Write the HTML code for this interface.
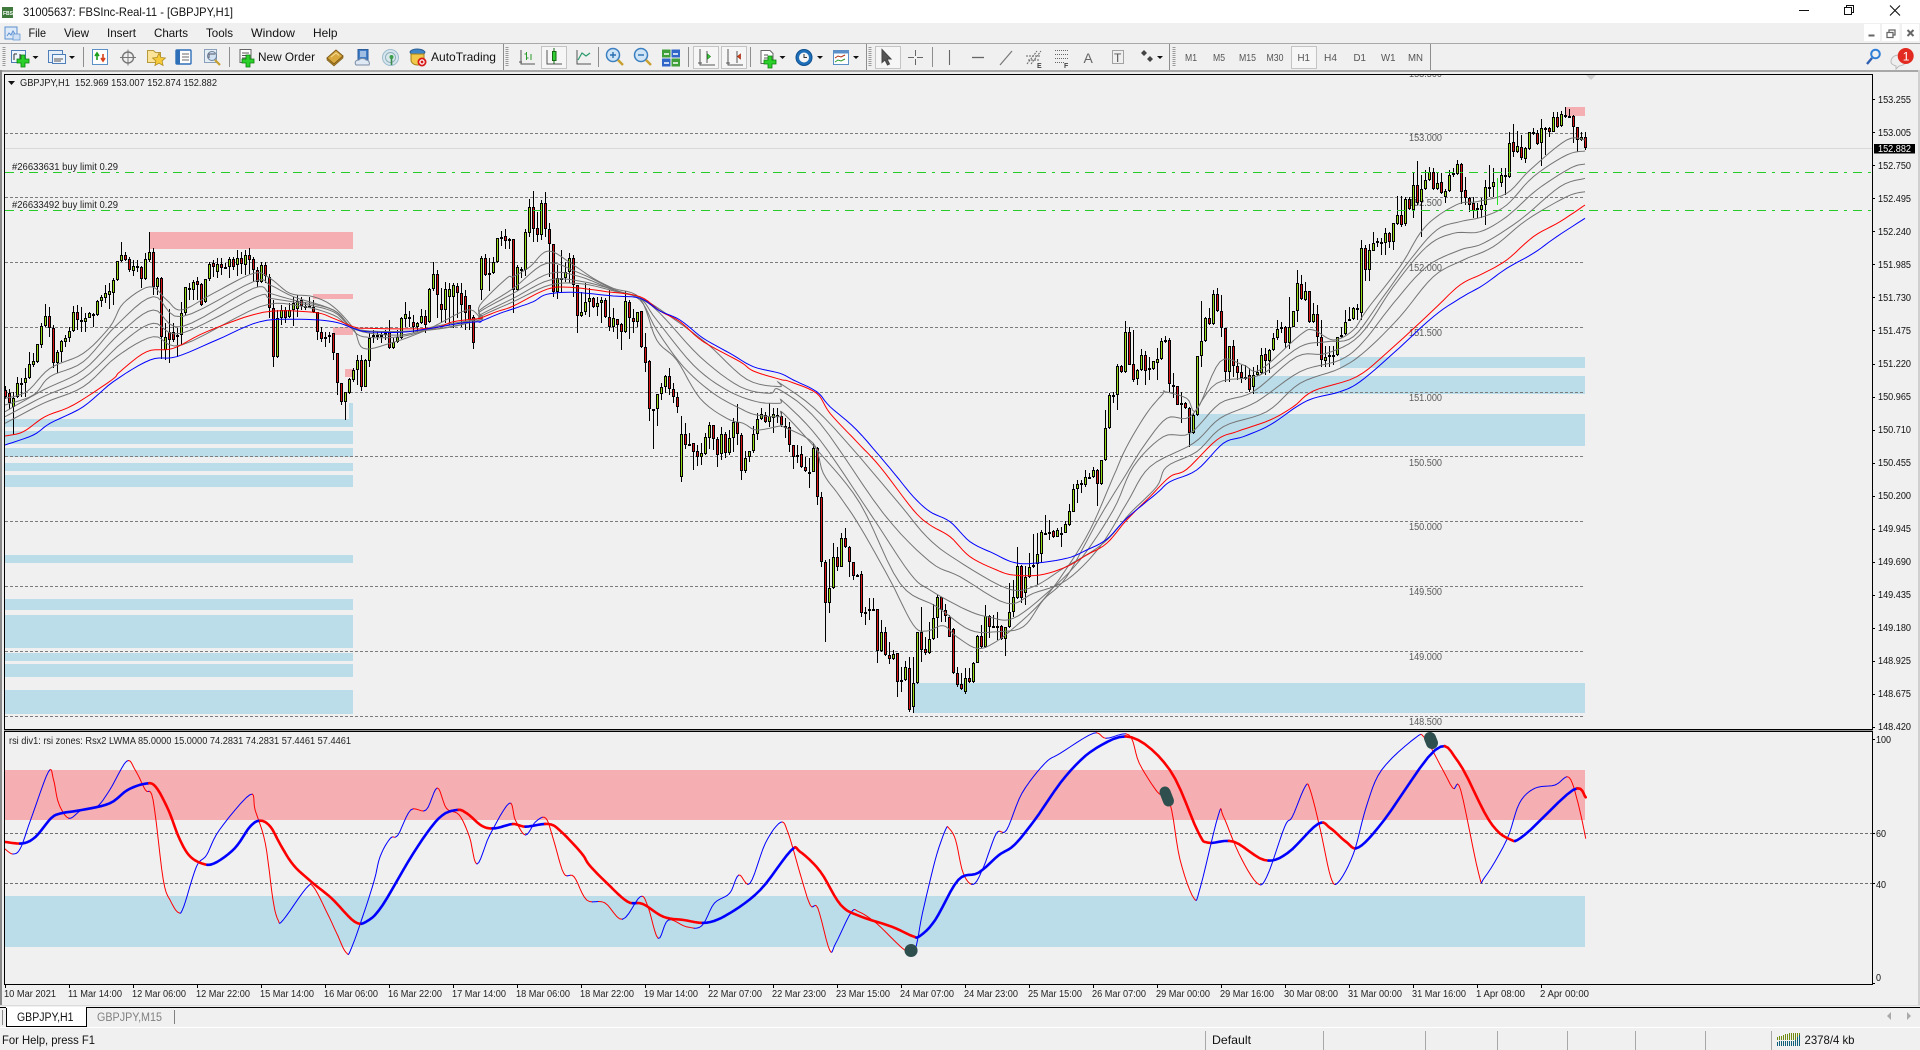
<!DOCTYPE html>
<html><head><meta charset="utf-8"><title>31005637: FBSInc-Real-11 - [GBPJPY,H1]</title>
<style>
html,body{margin:0;padding:0;width:1920px;height:1050px;overflow:hidden;background:#f0f0f0}
svg{display:block;font-family:"Liberation Sans",sans-serif}
.m{font-size:12px;fill:#111}
.tf{font-size:10.5px;fill:#555}
.ax{font-size:10px;fill:#111}
.t{font-size:10px;fill:#222}
.ml{font-size:10px;fill:#5a5a5a}
.ic{fill:none;stroke:#555;stroke-width:1}
</style></head><body>
<svg id="s" xmlns="http://www.w3.org/2000/svg" width="1920" height="1050" viewBox="0 0 1920 1050">
<defs>
<clipPath id="cm"><rect x="5" y="75" width="1867" height="654"/></clipPath>
<clipPath id="cs"><rect x="5" y="732" width="1867" height="252"/></clipPath>
<g id="plus"><path d="M-2-6h4v4h4v4h-4v4h-4v-4h-4v-4h4z" fill="#2bd02b" stroke="#0b7f0b" stroke-width=".8"/></g>
<g id="arr"><path d="M-3-1.5h6L0 1.5z" fill="#111"/></g>
<g id="grip"><path d="M0 0v20" stroke="#999" stroke-width="3" stroke-dasharray="1 1"/></g>
</defs>
<rect width="1920" height="1050" fill="#f0f0f0"/>
<!-- title bar -->
<rect width="1920" height="23" fill="#fff"/>
<rect x="2" y="7" width="11" height="11" fill="#3f7a3c"/>
<text x="3" y="15" font-size="5" font-weight="bold" fill="#fff">FBS</text>
<text x="23" y="16" font-size="12" fill="#111" textLength="210" lengthAdjust="spacingAndGlyphs">31005637: FBSInc-Real-11 - [GBPJPY,H1]</text>
<path d="M1799 10.5h10" stroke="#111"/>
<path d="M1844.5 7.5h7v7h-7zM1846.5 7.5v-2h7v7h-2" fill="none" stroke="#111"/>
<path d="M1890 5.5l10 10M1900 5.5l-10 10" stroke="#111" stroke-width="1.1"/>
<!-- menu bar -->
<rect x="5" y="27" width="12" height="12" fill="#dfeaf8" stroke="#5b8fd0"/>
<path d="M7 36l2-3 2 2 2-4 2 3" fill="none" stroke="#5b8fd0"/>
<rect x="13" y="34" width="7" height="6" fill="#cfe0f5" stroke="#5b8fd0" stroke-width=".7"/>
<text class="m" x="28.5" y="37" textLength="17.5" lengthAdjust="spacingAndGlyphs">File</text>
<text class="m" x="64" y="37" textLength="25" lengthAdjust="spacingAndGlyphs">View</text>
<text class="m" x="107" y="37" textLength="29" lengthAdjust="spacingAndGlyphs">Insert</text>
<text class="m" x="154" y="37" textLength="34" lengthAdjust="spacingAndGlyphs">Charts</text>
<text class="m" x="206" y="37" textLength="27" lengthAdjust="spacingAndGlyphs">Tools</text>
<text class="m" x="251" y="37" textLength="44" lengthAdjust="spacingAndGlyphs">Window</text>
<text class="m" x="313" y="37" textLength="24.5" lengthAdjust="spacingAndGlyphs">Help</text>
<g>
<rect x="1864" y="24" width="16" height="17" fill="#fff"/><rect x="1882" y="24" width="17.5" height="17" fill="#fff"/><rect x="1902" y="24" width="17" height="17" fill="#fff"/>
<path d="M1868.5 35.5h6" stroke="#666" stroke-width="2"/>
<path d="M1887 32.5h6v5h-6zM1889 32v-2h6v5h-2" fill="none" stroke="#666" stroke-width="1.3"/>
<path d="M1907.5 30l6 6M1913.5 30l-6 6" stroke="#666" stroke-width="2"/>
</g>
<!-- toolbar -->
<rect x="0" y="43" width="1920" height="1" fill="#a8a8a8"/>
<rect x="0" y="70" width="1920" height="2" fill="#a8a8a8"/>
<g stroke="#8e8e8e"><path d="M83.5 47v20M229.5 47v20M503.5 44v26M598.5 47v20M688.5 47v20M750.5 47v20M866.5 44v26M932.5 47v20M1169.5 44v26M1430.5 44v26"/></g>
<use href="#grip" x="4" y="47"/><use href="#grip" x="507" y="47"/><use href="#grip" x="870" y="47"/><use href="#grip" x="1174" y="47"/>
<!-- active boxes -->
<g fill="#f6f6f6" stroke="#c4c4c4"><rect x="541.5" y="46.5" width="25" height="22"/><rect x="693.5" y="46.5" width="25" height="22"/><rect x="721.5" y="46.5" width="25" height="22"/><rect x="875.5" y="46.5" width="25" height="22"/><rect x="1291.5" y="46.5" width="25" height="22"/></g>
<!-- new chart -->
<rect x="11.5" y="50.5" width="14" height="12" fill="#eef4fb" stroke="#4f7fb8"/><path d="M14 60v-6M14 54l3 0M20 60v-6" stroke="#333" fill="none"/><use href="#plus" x="23" y="61"/><use href="#arr" x="35.5" y="57.5"/>
<rect x="48.5" y="50.5" width="14" height="12" fill="#e6eff9" stroke="#4f7fb8"/><rect x="52.5" y="54.5" width="13" height="9" fill="#eef4fb" stroke="#4f7fb8"/><path d="M54 59h9M54 61h7" stroke="#555"/><use href="#arr" x="72" y="57.5"/>
<!-- market watch -->
<rect x="92.5" y="49.5" width="15" height="15" fill="#fff" stroke="#5b8fc8"/><path d="M97 60v-6m-2 2l2-3 2 3" fill="none" stroke="#1aa01a" stroke-width="1.6"/><path d="M103 54v6m-2-2l2 3 2-3" fill="none" stroke="#d9401a" stroke-width="1.6"/>
<!-- crosshair -->
<circle cx="128" cy="57.5" r="5.5" fill="none" stroke="#777" stroke-width="1.4"/><path d="M128 49.5v16M120 57.5h16" stroke="#777"/>
<!-- folder star -->
<path d="M147.5 50.5h6l2 2h5v10h-13z" fill="#fbe39a" stroke="#b69a3c"/><path d="M159 53l2 4.5 4.5.5-3.4 3 1 4.6-4.1-2.4-4.1 2.4 1-4.6-3.4-3 4.5-.5z" fill="#f5c93a" stroke="#a9851a" stroke-width=".7"/>
<!-- terminal -->
<rect x="176" y="50" width="15" height="14" rx="1" fill="#fff" stroke="#2e6fb8" stroke-width="1.4"/><rect x="176" y="50" width="4" height="14" fill="#2e6fb8"/><path d="M182 54h7M182 57h7M182 60h7" stroke="#6a6a6a"/>
<!-- tester -->
<rect x="204.5" y="49.5" width="12" height="13" fill="#e5edf5" stroke="#8aa0b8"/><circle cx="212" cy="56" r="4.5" fill="#cfe1f2" stroke="#6a7f98"/><path d="M215 60l5 5" stroke="#c8a030" stroke-width="2.2"/><path d="M209 58v-4h6" stroke="#556" fill="none"/>
<!-- new order -->
<rect x="240" y="49.5" width="11" height="13" fill="#fff" stroke="#666"/><path d="M242 53h7M242 55.5h7M242 58h4" stroke="#555"/><use href="#plus" x="248" y="61"/>
<text x="258" y="61" font-size="12" fill="#111" textLength="57" lengthAdjust="spacingAndGlyphs">New Order</text>
<!-- book -->
<path d="M327 58l9-8 7 6-9 8z" fill="#d9a93f" stroke="#7d5a16"/><path d="M327 58l0 2 7 6 9-8v-2l-9 8z" fill="#a9802a" stroke="#7d5a16" stroke-width=".6"/><path d="M331 57l5-4 3 2.500" stroke="#f4dc9a" fill="none"/>
<!-- cloud -->
<rect x="358" y="49.5" width="10" height="11" fill="#3f7dc6" stroke="#2a5c9c"/><path d="M360 52h6M360 54h6M360 56h6" stroke="#fff"/><path d="M356 65c-2-3 0-5 3-5 1-2 6-2 7 0 3 0 4 3 3 5z" fill="#dfe9f5" stroke="#7a8ca4"/>
<!-- signals -->
<circle cx="390.5" cy="57.5" r="8" fill="#d7e6ee" stroke="#9cbccc"/><circle cx="390.5" cy="57.5" r="5" fill="#d9e8ea" stroke="#8fb0bc"/><circle cx="391.5" cy="57" r="2" fill="#3ba04a"/><path d="M391.5 58v7" stroke="#3b8a50" stroke-width="1.6"/>
<!-- autotrading -->
<path d="M410 52c2-4 12-4 15 0l-1 2h-13z" fill="#3f86c8" stroke="#2a5c90"/><path d="M411 54h13v6c0 3-3 5-6.500 5s-6.500-2-6.500-5z" fill="#f2c84a" stroke="#a0801a"/><circle cx="422" cy="62" r="3.6" fill="#fff" stroke="#d81818" stroke-width="1.8"/><rect x="420.700" y="60.700" width="2.600" height="2.600" fill="#d81818"/>
<text x="431" y="61" font-size="12" fill="#111" textLength="65" lengthAdjust="spacingAndGlyphs">AutoTrading</text>
<!-- chart types -->
<g stroke="#555" fill="none"><path d="M521 50v14h14M519 62h3"/><path d="M526.500 52v8M524.500 54h2M526.500 58h2M531 54v6" stroke="#2a9a2a"/></g>
<g stroke="#555" fill="none"><path d="M547 50v14h15"/><rect x="552.500" y="51.500" width="3.500" height="9" fill="#33cc33" stroke="#136b13"/><path d="M554 48v3M554 61v3" stroke="#136b13"/></g>
<g stroke="#555" fill="none"><path d="M577 50v14h14"/><path d="M578 60l4-7 4 3 4-3" stroke="#2a9a6a" stroke-width="1.2"/></g>
<!-- zoom -->
<circle cx="613" cy="55" r="6.500" fill="#cfe4f7" stroke="#3b7fc0" stroke-width="1.5"/><path d="M610 55h6M613 52v6" stroke="#2a6fb0" stroke-width="1.400"/><path d="M618 60l5 5" stroke="#c8a030" stroke-width="2.400"/>
<circle cx="641" cy="55" r="6.500" fill="#cfe4f7" stroke="#3b7fc0" stroke-width="1.5"/><path d="M638 55h6" stroke="#2a6fb0" stroke-width="1.400"/><path d="M646 60l5 5" stroke="#c8a030" stroke-width="2.400"/>
<!-- tile -->
<g><rect x="662" y="49.500" width="8.500" height="8" fill="#3fa03a"/><rect x="671.500" y="49.500" width="8.500" height="8" fill="#2f66c8"/><rect x="662" y="58.500" width="8.500" height="8" fill="#2f66c8"/><rect x="671.500" y="58.500" width="8.500" height="8" fill="#3fa03a"/><path d="M664 54h5M673 54h5M664 63h5M673 63h5" stroke="#fff" stroke-width="1.500"/></g>
<!-- autoscroll / shift -->
<g stroke="#555" fill="none"><path d="M700 49v16h15M698 63h4M707 51v12"/><path d="M707.500 54l3 2.500-3 2.500z" fill="#3fcc3f" stroke="#1a8a1a" stroke-width=".7"/></g>
<g stroke="#555" fill="none"><path d="M728 49v16h15M726 63h4M737 51v12"/><path d="M740.500 54l-3 2.500 3 2.500z" fill="#d8441a" stroke="#a02a10" stroke-width=".7"/></g>
<!-- indicators -->
<path d="M761 50.500h9l3 3v10h-12z" fill="#fff" stroke="#666"/><path d="M764 55h4M764 58h4" stroke="#555"/><use href="#plus" x="770" y="62"/><use href="#arr" x="782.500" y="57.500"/>
<!-- clock -->
<circle cx="804" cy="57.500" r="8" fill="#1f6fb8" stroke="#0d4f90"/><circle cx="804" cy="57.500" r="5" fill="#f5f5f5"/><path d="M804 54v3.500h3" stroke="#333" fill="none"/><use href="#arr" x="820" y="57.500"/>
<!-- template -->
<rect x="833.500" y="50.500" width="15" height="14" fill="#fff" stroke="#5b8fc8"/><rect x="833.500" y="50.500" width="15" height="3" fill="#5b8fc8"/><path d="M835 58l3-2 3 1 4-2" stroke="#b03010" fill="none"/><path d="M835 62l3-2 3 1 4-2" stroke="#2a9a2a" fill="none"/><use href="#arr" x="856" y="57.500"/>
<!-- cursor -->
<path d="M882 49.500v13l3-2.500 2.500 5 2-1-2.500-5h4z" fill="#555" stroke="#444"/>
<path d="M915.500 50v15M908 57.500h15" stroke="#666" stroke-dasharray="6 3"/>
<path d="M949.500 50v15" stroke="#666" stroke-width="1.100"/>
<path d="M972 57.500h12" stroke="#666" stroke-width="1.300"/>
<path d="M1000 65l12-14" stroke="#777" stroke-width="1.200"/>
<g stroke="#666" fill="none"><path d="M1027 64l10-13M1031 64l10-13M1026 56h14M1028 60h12" stroke-dasharray="2 1"/></g><text x="1037" y="68" font-size="7" fill="#444" font-weight="bold">E</text>
<path d="M1055 50.500h14M1055 54.500h14M1055 58.500h14M1055 62.500h10" stroke="#666" stroke-dasharray="1 1"/><text x="1064" y="68" font-size="7" fill="#444" font-weight="bold">F</text>
<text x="1083.500" y="63" font-size="14" fill="#666">A</text>
<rect x="1112.500" y="50.500" width="11" height="13" fill="none" stroke="#555" stroke-dasharray="1 1"/><text x="1114" y="62" font-size="12" fill="#555">T</text>
<path d="M1144 50l3 3-3 3-3-3zM1150 56l3 3-3 3-3-3z" fill="#444"/><use href="#arr" x="1160" y="57.500"/>
<!-- periods -->
<text class="tf" x="1185" y="61" textLength="12" lengthAdjust="spacingAndGlyphs">M1</text>
<text class="tf" x="1213" y="61" textLength="12" lengthAdjust="spacingAndGlyphs">M5</text>
<text class="tf" x="1239" y="61" textLength="17" lengthAdjust="spacingAndGlyphs">M15</text>
<text class="tf" x="1266.500" y="61" textLength="17" lengthAdjust="spacingAndGlyphs">M30</text>
<text class="tf" x="1297.500" y="61" textLength="12.500" lengthAdjust="spacingAndGlyphs">H1</text>
<text class="tf" x="1324" y="61" textLength="13" lengthAdjust="spacingAndGlyphs">H4</text>
<text class="tf" x="1353.500" y="61" textLength="12.500" lengthAdjust="spacingAndGlyphs">D1</text>
<text class="tf" x="1381" y="61" textLength="14.500" lengthAdjust="spacingAndGlyphs">W1</text>
<text class="tf" x="1408" y="61" textLength="15" lengthAdjust="spacingAndGlyphs">MN</text>
<!-- search/chat -->
<circle cx="1875.500" cy="54" r="4.300" fill="none" stroke="#2f7fd8" stroke-width="2"/><path d="M1872 58l-5 6" stroke="#2f5fb0" stroke-width="2.400"/>
<path d="M1891 62c0-5 4-7 8-7s7 3 7 6-4 5-7 5l-3 3v-3c-3-1-5-2-5-4z" fill="#eee" stroke="#bbb"/>
<circle cx="1905.700" cy="56" r="8" fill="#e22a20"/><text x="1902.800" y="60.500" font-size="12" fill="#fff">1</text>

<!-- chart frame areas -->
<rect x="0" y="70" width="2" height="936" fill="#8a8a8a"/>
<rect x="5" y="75" width="1867" height="654" fill="#f0f0f0"/>
<rect x="5" y="732" width="1867" height="252" fill="#f0f0f0"/>

<g clip-path="url(#cm)">
<!-- zones main -->
<g fill="#bbddea">
<rect x="349" y="403" width="4" height="16"/>
<rect x="5" y="419" width="348" height="8"/><rect x="5" y="431" width="348" height="13"/><rect x="5" y="448" width="348" height="9"/><rect x="5" y="463" width="348" height="8"/><rect x="5" y="475" width="348" height="12"/>
<rect x="5" y="555" width="348" height="8"/><rect x="5" y="599" width="348" height="11"/><rect x="5" y="615" width="348" height="33"/><rect x="5" y="653" width="348" height="8"/><rect x="5" y="664" width="348" height="13"/><rect x="5" y="690" width="348" height="24"/>
<rect x="1340" y="357" width="245" height="11"/><rect x="1253" y="376" width="332" height="18"/><rect x="1190" y="414" width="395" height="32"/><rect x="913" y="683" width="672" height="30"/>
</g>
<g fill="#f5aeb1">
<rect x="150" y="232" width="203" height="17"/><rect x="313" y="294" width="40" height="5"/><rect x="333" y="327" width="20" height="8"/><rect x="345" y="369" width="8" height="8"/>
<rect x="1566" y="107" width="19" height="9"/>
</g>
<!-- grid -->
<g stroke="#7c7c7c" stroke-dasharray="3 2" fill="none">
<path d="M5 133.500H1585M5 197.500H1585M5 262.500H1585M5 327.500H1585M5 392.500H1585M5 456.500H1585M5 521.500H1585M5 586.500H1585M5 651.500H1585M5 716.500H1585"/>
</g>
<path d="M5 148.500H1872" stroke="#d8d8d8"/>
<path d="M1586 75h10l-5 5z" fill="#cfcfcf"/>
<g>
<text class="ml" x="1409" y="77" textLength="33" lengthAdjust="spacingAndGlyphs">153.500</text>
<text class="ml" x="1409" y="141" textLength="33" lengthAdjust="spacingAndGlyphs">153.000</text>
<text class="ml" x="1409" y="206" textLength="33" lengthAdjust="spacingAndGlyphs">152.500</text>
<text class="ml" x="1409" y="271" textLength="33" lengthAdjust="spacingAndGlyphs">152.000</text>
<text class="ml" x="1409" y="336" textLength="33" lengthAdjust="spacingAndGlyphs">151.500</text>
<text class="ml" x="1409" y="401" textLength="33" lengthAdjust="spacingAndGlyphs">151.000</text>
<text class="ml" x="1409" y="466" textLength="33" lengthAdjust="spacingAndGlyphs">150.500</text>
<text class="ml" x="1409" y="530" textLength="33" lengthAdjust="spacingAndGlyphs">150.000</text>
<text class="ml" x="1409" y="595" textLength="33" lengthAdjust="spacingAndGlyphs">149.500</text>
<text class="ml" x="1409" y="660" textLength="33" lengthAdjust="spacingAndGlyphs">149.000</text>
<text class="ml" x="1409" y="725" textLength="33" lengthAdjust="spacingAndGlyphs">148.500</text>
</g>
<g id="candles"></g>
<g id="mas" fill="none"></g>
<path d="M5 172.500H1872M5 210.500H1872" stroke="#28cc28" stroke-dasharray="9 6 3 6" fill="none"/>
<path d="M1497.500 178v27" stroke="#28e028"/>
<text class="t" x="12" y="170" fill="#333" textLength="106" lengthAdjust="spacingAndGlyphs">#26633631 buy limit 0.29</text>
<text class="t" x="12" y="208" fill="#333" textLength="106" lengthAdjust="spacingAndGlyphs">#26633492 buy limit 0.29</text>
<path d="M8 81h7l-3.500 4z" fill="#111"/>
<text class="t" x="20" y="86" fill="#111" xml:space="preserve" textLength="197" lengthAdjust="spacingAndGlyphs">GBPJPY,H1  152.969 153.007 152.874 152.882</text>
</g>

<g clip-path="url(#cs)">
<rect x="5" y="770" width="1580" height="50" fill="#f5aeb1"/>
<rect x="5" y="896" width="1580" height="51" fill="#bbddea"/>
<path d="M5 833.500H1872M5 883.500H1872" stroke="#707070" stroke-dasharray="3 2" fill="none"/>
<g id="rsi" fill="none" stroke-linejoin="round" stroke-linecap="round"></g>
<g stroke="#2f4f4f" stroke-linecap="round" fill="none">
<path d="M911 950.500h.1" stroke-width="13"/>
<path d="M1165 792l3.500 9" stroke-width="11"/>
<path d="M1430 738l2 5" stroke-width="12"/>
</g>
<text class="t" x="9" y="744" fill="#111" textLength="342" lengthAdjust="spacingAndGlyphs">rsi div1: rsi zones: Rsx2 LWMA 85.0000 15.0000 74.2831 74.2831 57.4461 57.4461</text>
</g>

<!-- frame lines -->
<g fill="#000">
<rect x="4" y="74" width="1869" height="1"/>
<rect x="4" y="74" width="1" height="911"/>
<rect x="1872" y="74" width="1" height="911"/>
<rect x="4" y="984" width="1869" height="1"/>
<rect x="4" y="729" width="1869" height="1"/>
<rect x="4" y="731" width="1869" height="1"/>
</g>
<rect x="4" y="730" width="1869" height="1" fill="#9a9a9a"/>

<!-- right axis -->
<g id="axt" stroke="#000" fill="none"><path d="M1872 99.500h3M1872 132.500h3M1872 165.500h3M1872 198.500h3M1872 231.500h3M1872 264.500h3M1872 297.500h3M1872 330.500h3M1872 364.500h3M1872 397.500h3M1872 430.500h3M1872 463.500h3M1872 496.500h3M1872 529.500h3M1872 562.500h3M1872 595.500h3M1872 628.500h3M1872 661.500h3M1872 694.500h3M1872 727.500h3M1872 739.500h3M1872 833.500h3M1872 883.500h3M1872 983.500h3"/></g>
<g>
<text class="ax" x="1878" y="103" textLength="33" lengthAdjust="spacingAndGlyphs">153.255</text>
<text class="ax" x="1878" y="136" textLength="33" lengthAdjust="spacingAndGlyphs">153.005</text>
<text class="ax" x="1878" y="169" textLength="33" lengthAdjust="spacingAndGlyphs">152.750</text>
<text class="ax" x="1878" y="202" textLength="33" lengthAdjust="spacingAndGlyphs">152.495</text>
<text class="ax" x="1878" y="235" textLength="33" lengthAdjust="spacingAndGlyphs">152.240</text>
<text class="ax" x="1878" y="268" textLength="33" lengthAdjust="spacingAndGlyphs">151.985</text>
<text class="ax" x="1878" y="301" textLength="33" lengthAdjust="spacingAndGlyphs">151.730</text>
<text class="ax" x="1878" y="334" textLength="33" lengthAdjust="spacingAndGlyphs">151.475</text>
<text class="ax" x="1878" y="367" textLength="33" lengthAdjust="spacingAndGlyphs">151.220</text>
<text class="ax" x="1878" y="400" textLength="33" lengthAdjust="spacingAndGlyphs">150.965</text>
<text class="ax" x="1878" y="433" textLength="33" lengthAdjust="spacingAndGlyphs">150.710</text>
<text class="ax" x="1878" y="466" textLength="33" lengthAdjust="spacingAndGlyphs">150.455</text>
<text class="ax" x="1878" y="499" textLength="33" lengthAdjust="spacingAndGlyphs">150.200</text>
<text class="ax" x="1878" y="532" textLength="33" lengthAdjust="spacingAndGlyphs">149.945</text>
<text class="ax" x="1878" y="565" textLength="33" lengthAdjust="spacingAndGlyphs">149.690</text>
<text class="ax" x="1878" y="598" textLength="33" lengthAdjust="spacingAndGlyphs">149.435</text>
<text class="ax" x="1878" y="631" textLength="33" lengthAdjust="spacingAndGlyphs">149.180</text>
<text class="ax" x="1878" y="664" textLength="33" lengthAdjust="spacingAndGlyphs">148.925</text>
<text class="ax" x="1878" y="697" textLength="33" lengthAdjust="spacingAndGlyphs">148.675</text>
<text class="ax" x="1878" y="730" textLength="33" lengthAdjust="spacingAndGlyphs">148.420</text>
<rect x="1874" y="144" width="41" height="9.500" fill="#000"/>
<text x="1878" y="152" font-size="10" fill="#fff" textLength="33" lengthAdjust="spacingAndGlyphs">152.882</text>
<text class="ax" x="1876" y="743" textLength="15" lengthAdjust="spacingAndGlyphs">100</text>
<text class="ax" x="1876" y="837" textLength="10" lengthAdjust="spacingAndGlyphs">60</text>
<text class="ax" x="1876" y="888" textLength="10" lengthAdjust="spacingAndGlyphs">40</text>
<text class="ax" x="1876" y="981" textLength="5" lengthAdjust="spacingAndGlyphs">0</text>
</g>

<!-- time axis -->
<path d="M5.500 985v3M69.500 985v3M133.500 985v3M197.500 985v3M261.500 985v3M325.500 985v3M389.500 985v3M453.500 985v3M517.500 985v3M581.500 985v3M645.500 985v3M709.500 985v3M773.500 985v3M837.500 985v3M901.500 985v3M965.500 985v3M1029.500 985v3M1093.500 985v3M1157.500 985v3M1221.500 985v3M1285.500 985v3M1349.500 985v3M1413.500 985v3M1477.500 985v3M1541.500 985v3" stroke="#000"/>
<g>
<text class="t" x="4" y="997" textLength="52" lengthAdjust="spacingAndGlyphs">10 Mar 2021</text>
<text class="t" x="68" y="997" textLength="54" lengthAdjust="spacingAndGlyphs">11 Mar 14:00</text>
<text class="t" x="132" y="997" textLength="54" lengthAdjust="spacingAndGlyphs">12 Mar 06:00</text>
<text class="t" x="196" y="997" textLength="54" lengthAdjust="spacingAndGlyphs">12 Mar 22:00</text>
<text class="t" x="260" y="997" textLength="54" lengthAdjust="spacingAndGlyphs">15 Mar 14:00</text>
<text class="t" x="324" y="997" textLength="54" lengthAdjust="spacingAndGlyphs">16 Mar 06:00</text>
<text class="t" x="388" y="997" textLength="54" lengthAdjust="spacingAndGlyphs">16 Mar 22:00</text>
<text class="t" x="452" y="997" textLength="54" lengthAdjust="spacingAndGlyphs">17 Mar 14:00</text>
<text class="t" x="516" y="997" textLength="54" lengthAdjust="spacingAndGlyphs">18 Mar 06:00</text>
<text class="t" x="580" y="997" textLength="54" lengthAdjust="spacingAndGlyphs">18 Mar 22:00</text>
<text class="t" x="644" y="997" textLength="54" lengthAdjust="spacingAndGlyphs">19 Mar 14:00</text>
<text class="t" x="708" y="997" textLength="54" lengthAdjust="spacingAndGlyphs">22 Mar 07:00</text>
<text class="t" x="772" y="997" textLength="54" lengthAdjust="spacingAndGlyphs">22 Mar 23:00</text>
<text class="t" x="836" y="997" textLength="54" lengthAdjust="spacingAndGlyphs">23 Mar 15:00</text>
<text class="t" x="900" y="997" textLength="54" lengthAdjust="spacingAndGlyphs">24 Mar 07:00</text>
<text class="t" x="964" y="997" textLength="54" lengthAdjust="spacingAndGlyphs">24 Mar 23:00</text>
<text class="t" x="1028" y="997" textLength="54" lengthAdjust="spacingAndGlyphs">25 Mar 15:00</text>
<text class="t" x="1092" y="997" textLength="54" lengthAdjust="spacingAndGlyphs">26 Mar 07:00</text>
<text class="t" x="1156" y="997" textLength="54" lengthAdjust="spacingAndGlyphs">29 Mar 00:00</text>
<text class="t" x="1220" y="997" textLength="54" lengthAdjust="spacingAndGlyphs">29 Mar 16:00</text>
<text class="t" x="1284" y="997" textLength="54" lengthAdjust="spacingAndGlyphs">30 Mar 08:00</text>
<text class="t" x="1348" y="997" textLength="54" lengthAdjust="spacingAndGlyphs">31 Mar 00:00</text>
<text class="t" x="1412" y="997" textLength="54" lengthAdjust="spacingAndGlyphs">31 Mar 16:00</text>
<text class="t" x="1476" y="997" textLength="49" lengthAdjust="spacingAndGlyphs">1 Apr 08:00</text>
<text class="t" x="1540" y="997" textLength="49" lengthAdjust="spacingAndGlyphs">2 Apr 00:00</text>
</g>

<!-- tabs -->
<rect x="0" y="1005" width="1920" height="1" fill="#dcdcdc"/>
<rect x="0" y="1007" width="1920" height="1" fill="#000"/>
<rect x="2" y="1010" width="1" height="15" fill="#8a8a8a"/>
<rect x="6" y="1007" width="80" height="19" fill="#fff"/>
<path d="M6.500 1008v18.500H86.500V1008" fill="none" stroke="#000"/>
<text x="17" y="1021" font-size="11.500" fill="#111" textLength="56.500" lengthAdjust="spacingAndGlyphs">GBPJPY,H1</text>
<text x="97" y="1021" font-size="11.500" fill="#808080" textLength="65" lengthAdjust="spacingAndGlyphs">GBPJPY,M15</text>
<rect x="174" y="1010" width="1" height="14" fill="#808080"/>
<path d="M1891 1012v8l-4-4zM1907 1012v8l4-4z" fill="#aaa"/>
<!-- status -->
<rect x="0" y="1027" width="1920" height="1" fill="#fff"/>
<text x="2" y="1044" font-size="12" fill="#111" textLength="93" lengthAdjust="spacingAndGlyphs">For Help, press F1</text>
<text x="1212" y="1044" font-size="12" fill="#111" textLength="39" lengthAdjust="spacingAndGlyphs">Default</text>
<path d="M1205.500 1031v19M1323.500 1031v19M1425.500 1031v19M1497.500 1031v19M1567.500 1031v19M1635.500 1031v19M1705.500 1031v19M1771.500 1031v19" stroke="#a8a8a8"/>
<g>
<path d="M1777.500 1037v3M1779.500 1036v4M1781.500 1036v4M1783.500 1035v5M1785.500 1034v6M1787.500 1034v6M1789.500 1033v7M1791.500 1033v7M1793.500 1033v7M1795.500 1033v7M1797.500 1033v7M1799.500 1033v7" stroke="#6f8a10"/>
<path d="M1777.500 1042v4M1779.500 1041v5M1781.500 1041v5M1783.500 1041v5M1785.500 1041v5M1787.500 1041v5M1789.500 1041v5M1791.500 1041v5M1793.500 1041v5M1795.500 1040v6M1797.500 1037v9M1799.500 1035v11" stroke="#0f5f7a"/>
</g>
<text x="1804.500" y="1044" font-size="12" fill="#111" textLength="50" lengthAdjust="spacingAndGlyphs">2378/4 kb</text>
<rect x="1918" y="70" width="2" height="935" fill="#d0d0d0"/>
</svg>
<script>
(function(){
var NS='http://www.w3.org/2000/svg';
function mk(par,a){var e=document.createElementNS(NS,'path');for(var k in a)e.setAttribute(k,a[k]);par.appendChild(e);return e;}
var seed=7;function rnd(){seed=(seed*1103515245+12345)&0x7fffffff;return seed/0x7fffffff;}
var W='',B='',G='',R='';
function sec(xs,oy,str){
 str.trim().split(/\s+/).forEach(function(t,i){
  var m=t.match(/^([grdn])(\d+)(?:-(\d+))?(?::(\d+)-(\d+))?$/);if(!m||m[1]=='n')return;
  var x=xs+4*i,top=Math.round(oy+ +m[2]/3),bot=m[3]?Math.round(oy+ +m[3]/3):top+1;
  if(bot-top<2)bot=top+2;
  var hi=m[4]?Math.round(oy+ +m[4]/3):top-Math.round(1+rnd()*5);
  var lo=m[5]?Math.round(oy+ +m[5]/3):bot+Math.round(1+rnd()*5);
  W+='M'+(x+.5)+' '+hi+'V'+lo;
  B+='M'+(x-1)+' '+top+'h3V'+bot+'h-3z';
  if(bot-top>2){var s='M'+x+' '+(top+1)+'h1V'+(bot-1)+'h-1z';if(m[1]=='g')G+=s;else if(m[1]=='r')R+=s;}
 });
}
sec(5,70,"r960-980 r970-1000 g983-1010:965-1095 g940-980:920-985 d938:925-980 g925-940:895-980 g883-925:845-928 g873-885:850-890 g823-875:823-880 g767-825:760-835 g737-767:703-770 r737-775:710-800 r775-880:765-895 g845-880:840-910 g813-845:810-875 g805-815:795-830 g783-805:770-815 g727-783:707-785 r727-750:705-780 d750:710-785 g743-755:730-785 g730-743:725-745 d732:728-770 g693-735:690-738 g682-693:675-710 g670-683:645-700 g663-676:640-718 g630-670:625-705 g572-630:572-632 g555-572:517-575 r555-570:545-572 r568-600:560-605 g588-602:570-618 d588:570-605 r590-627:588-655 g568-627:550-630 g547-570:487-575 r547-650:535-675 g625-650:620-675 r623-800:620-868 g800-840:760-870 r787-810:717-878 r787-810:760-815 d795:775-860 g730-795:695-825 g652-730:650-735 d655:640-690 g637-660:630-690 r633-645:620-690 r643-705:640-708 g628-697:628-700 g583-628:575-632 r580-592:570-620 g583-605:565-625 r583-593:565-615 d590:580-598 g568-590:560-625 r568-590:560-600 g565-585:540-618 r563-583:545-612 g555-585:540-615 r555-570:533-612 r568-600:560-635 r600-635:590-650 g585-637:575-640 r585-617:575-640 r620-715:612-745 r715-860:690-890 g745-860:720-865 g720-745:705-765 r720-745:712-760 g720-740:700-745 g700-720:680-768 g693-718:675-740 r690-708:680-720 d708:695-720 d708:680-715 r710-725:690-730 r727-787:725-810 r787-807:770-815 d800:785-830 d795:785-820 r790-850:788-870 r850-940:850-975 r940-995:940-1005 g967-995:965-1050 g927-970:925-972 g900-930:895-935 g870-900:855-945 r870-950:855-962 g870-950:868-952 g805-872:790-890 d795:780-820 d795:785-810 d795:785-820 d790:780-810 r787-835:750-838 g815-835:805-838 g800-815:780-818 g745-805:740-808 g733-747:695-770 d742:722-770 r755-770:735-790 g758-772:755-785 g737-760:718-762 r737-765:720-790 g658-755:655-760 g612-658:577-662 r612-675:600-745 r702-720:655-760 g658-720:635-760 g657-682:640-765 g645-682:640-775 r648-670:640-745 r670-705:640-770 r678-730:660-780 r705-750:705-780 r740-820:735-838");
sec(481,170,"g265-360:258-390 r265-315:252-318 d310:265-362 g277-310:262-312 g205-277:205-280 d202:182-228 r198-212:178-236 d208:205-236 r208-360:208-428 g292-360:285-362 d296:290-325 g187-300:178-318 g112-190:88-200 r112-178:63-215 r175-196:125-215 g100-196:90-210 r100-178:67-200 r178-222:160-320 r222-365:222-380 g325-365:285-387 d325:240-370 g307-325:275-335 g263-307:250-340 r263-345:255-380 r345-437:345-490 g427-437:365-442 g397-427:338-435 g385-395:355-440 r385-410:380-415 g400-410:380-437 g390-400:380-458 r390-440:385-445 r440-472:360-482 g445-472:415-485 r448-465:448-507 r462-487:460-540 g393-485:362-490 r395-445:390-508 r445-455:418-488 g425-455:425-470 r423-532:423-535 r530-578:490-605 r573-718:570-752 d716:716-838 g672-716:672-768 g650-672:640-690 g618-650:615-668 r618-658:595-675 r658-680:640-700 r682-712:665-730 g793-922:738-937 r793-825:760-838 d822:790-828 r820-845:820-900 r843-860:825-887 g850-860:820-885 g802-852:790-855 g765-805:755-838 r765-808:765-840 r807-855:800-890 g793-853:772-870 r793-850:785-865 g805-850:780-855 g755-805:745-845 r755-793:703-825 r795-902:790-930 g865-902:842-908 g843-862:842-875 g793-843:768-850 g747-793:728-810 g732-748:715-750 r735-755:725-760 g737-755:700-770 g732-745:715-790 d735:715-760 r737-765:727-770 d768:745-805 r770-826:755-845 r826-860:826-897 d855:825-880 r852-892:828-893 r892-902:860-905 d905:865-955 g835-905:820-907 r835-982:830-1005");
sec(821,380,"r352-547:335-560 r547-670:540-785 g625-670:537-700 g530-625:490-627 r530-560:500-572 g475-560:460-562 r475-502:445-505 r502-545:498-590 r545-587:545-600 d585:582-590 r583-700:572-710 d697:680-735 d687:655-720 d687:655-692 r688-812:688-848 g755-812:720-815 r755-825:740-828 r825-838:785-852 g822-836:810-840 r820-905:820-952 d900:862-935 g862-900:843-902 r865-990:832-995 g910-980:830-1000 g755-910:755-912 r757-810:682-845 r808-820:770-825 g778-820:725-822 g715-778:672-780 g652-715:645-775 r652-690:650-725 r690-707:672-725 r710-772:705-772 r748-880:745-882 r878-915:860-920 r912-926:880-930 g895-935:865-943 r895-907:865-910 g848-907:845-910 g767-848:765-850 r767-800:735-805 g708-800:675-805 r708-742:705-775 g737-742:705-745 d737:695-780 r737-778:735-780 g740-778:740-828 g695-740:610-745 g652-695:600-712 g557-655:502-657 r557-655:555-670 g592-640:558-675 g560-592:520-595 d555:462-565 g523-553:460-615 g457-523:450-545 d458:405-462 d456:420-480 r453-470:450-475 g450-470:445-472 d460:440-500 g432-458:422-460 g393-435:372-437 g328-395:312-397 g312-328:300-370 d310:300-340 g290-315:270-320 d290:280-295 g270-292:262-295 r270-313:268-378 g240-313:240-315");
sec(1105,90,"g1015-1110:960-1112 g915-1015:910-1018 d915:905-940 g828-915:822-960 r828-845:825-848 g727-845:693-848 r727-825:710-825 r823-870:720-875 g840-868:838-885 g795-840:778-842 r795-842:783-885 d833:800-870 g812-838:812-840 g807-820:775-870 g752-807:745-810 d750:738-760 r750-882:745-905 d885:850-925 r888-945:888-945 d940:905-1000 r938-955:935-958 r955-1030:952-1070 g975-1030:970-1032 g798-975:798-978 g752-798:632-830 g685-752:682-755 r685-703:655-705 g612-703:600-705 r612-663:595-665 r663-713:615-740 r713-845:713-875 g768-845:768-875 r768-828:750-860 r828-850:808-870 r847-865:825-878 d860:825-870 r855-900:835-905 g855-892:832-912 g847-855:825-858 g795-850:775-852 r793-812:775-855 g780-812:778-850 g745-780:730-782 g717-745:690-750 d710:695-730 r712-760:708-775 g712-758:622-776 g664-712:664-712 g580-664:540-695 r582-628:555-630 g602-630:575-632 r603-695:603-700 g672-695:640-698 r672-742:645-768 r742-810:690-830 g802-812:768-830 d795:768-830 d795:768-825 g742-795:740-797 d735:712-745 g695-733:660-735 d688:650-690 g655-688:652-690 d655:642-690 g475-670:450-690 r475-540:465-572 g480-540:462-572 g460-482:425-484 d453:445-470 d455:445-495 g428-460:415-495 r428-455:425-475 g400-455:400-480 g375-402:318-405 r375-405:318-410 g328-403:320-408 r328-358:320-360 g285-360:250-385 r285-340:213-345 g298-337:255-440 g270-298:240-300 g247-270:232-272 r247-298:235-300 g278-298:250-300 r275-310:250-312 g303-320:298-338 g255-302:240-305 d248:235-262 g222-253:210-255 r222-305:220-342 r300-325:262-345 r325-345:320-365 r338-362:320-385 d355:340-385 g345-360:325-385 g292-345:270-405 d290:225-320 g275-290:235-322 n0 g255-280:235-290 r255-262:235-315 g160-262:125-265 r157-187:102-200 g168-187:122-190 r170-205:135-210 g175-208:170-218 g127-178:125-180 d127:115-135 r130-163:120-165 g115-160:87-228 d115:112-195 r115-125:112-140 g82-125:65-125 r82-110:65-115 g72-108:62-112 d74:50-85 d78:58-85 r78-112:75-158 r112-150:110-185 g140-150:125-152 r142-175:125-180");
var c=document.getElementById('candles');
mk(c,{d:W,stroke:'#000','stroke-width':1,fill:'none','shape-rendering':'crispEdges'});
mk(c,{d:B,fill:'#000','shape-rendering':'crispEdges'});
mk(c,{d:G,fill:'#96dc14','shape-rendering':'crispEdges'});
mk(c,{d:R,fill:'#d81414','shape-rendering':'crispEdges'});

function pts(ox,oy,sx,sy,str){return str.trim().split(/\s+/).map(function(p){var a=p.split(',');return [ox+a[0]/sx,oy+a[1]/sy];});}
function line(secs){var a=[];secs.forEach(function(s){a=a.concat(pts(s[0],s[1],3,3,s[2]));});return a;}
function d(a){return 'M'+a.map(function(p){return p[0].toFixed(1)+' '+p[1].toFixed(1);}).join('L');}
/* Catmull-Rom resampling so the traced points read as smooth curves */
function smooth(a,n){
 var o=[a[0]];
 for(var i=0;i<a.length-1;i++){
  var p0=a[Math.max(i-1,0)],p1=a[i],p2=a[i+1],p3=a[Math.min(i+2,a.length-1)];
  for(var k=1;k<=n;k++){
   var t=k/n,t2=t*t,t3=t2*t;
   var f=function(j){return .5*(2*p1[j]+(p2[j]-p0[j])*t+(2*p0[j]-5*p1[j]+4*p2[j]-p3[j])*t2+(3*p1[j]-p0[j]-3*p2[j]+p3[j])*t3);};
   o.push([f(0),f(1)]);
  }
 }
 return o;
}
var M=document.getElementById('mas');
var greys=[
 [[0,70,"15,985 80,965 150,895 250,850 330,770 370,700 450,650 500,690 545,720 640,670 760,610 810,625 870,670 940,680 1000,710 1060,775 1090,835 1170,820 1280,780 1400,720 1440,740"],
  [480,170,"0,405 80,325 100,320 150,290 205,243 280,285 340,325 400,355 480,385 530,510 590,570 660,685 740,745 790,760 830,780 900,768"],
  [780,380,"10,140 100,190 130,280 180,350 240,440 330,600 400,735 440,753 490,737 530,770 590,805 640,790 700,745 780,670 850,580 930,450 1000,290 1040,200 1100,100 1150,40"],
  [1100,90,"195,905 260,925 290,960 360,815 430,825 480,840 600,735 640,720 700,750 760,720 800,660 900,530 960,430 1010,380 1080,340 1130,335 1220,310 1290,240 1400,150 1455,150"]],
 [[0,70,"15,1005 100,975 150,920 250,875 350,765 460,680 545,740 760,635 810,645 880,680 1000,720 1050,770 1090,800 1200,800 1300,775 1440,745"],
  [480,170,"0,420 100,355 200,280 300,310 400,358 480,390 530,480 610,590 700,670 780,715 830,735 900,740"],
  [780,380,"10,100 120,220 240,370 360,610 470,680 570,750 650,755 730,740 790,660 860,590 960,410 1040,280"],
  [1100,90,"130,1070 200,985 270,980 350,880 480,855 600,770 680,755 760,740 850,620 930,510 1010,420 1080,395 1150,380 1220,345 1300,260 1400,195 1455,183"]],
 [[0,70,"15,1025 130,960 250,900 360,790 460,720 545,770 760,655 810,670 880,690 1000,720 1070,780 1200,795 1300,770 1440,745"],
  [480,170,"0,425 100,370 210,310 300,320 400,360 480,385 530,450 640,585 740,660 830,695 900,700"],
  [780,380,"10,65 120,180 270,400 390,580 450,630 560,690 630,712 700,715 800,640 900,540 1000,390"],
  [1100,90,"100,1130 190,1040 270,1030 360,940 460,905 590,800 680,790 780,735 880,590 980,470 1060,430 1140,425 1220,380 1310,300 1410,235 1455,222"]],
 [[0,70,"15,1040 130,980 250,925 370,815 460,760 545,790 770,680 810,685 900,700 1000,725 1080,780 1280,780 1440,750"],
  [480,170,"0,435 100,385 210,330 310,335 420,365 480,385 540,430 660,560 780,650 870,670"],
  [780,380,"0,30 120,130 310,400 450,545 540,590 680,670 760,640 860,600 960,500 1040,370"],
  [1100,90,"150,1130 280,1060 360,985 470,935 600,845 720,810 790,755 880,640 980,530 1080,480 1150,460 1260,390 1380,290 1455,265"]],
 [[0,70,"15,1060 130,1000 250,950 350,860 460,800 545,825 780,710 900,708 1000,735 1080,780 1290,780 1440,750"],
  [480,170,"0,440 100,395 210,345 310,342 420,368 480,383 550,425 680,520 800,628 900,650"],
  [780,380,"0,10 130,110 340,350 440,470 530,540 680,625 760,620 850,565 970,490 1050,400 1130,320"],
  [1100,90,"200,1130 290,1085 370,1010 500,965 600,880 720,835 800,780 900,680 1000,560 1090,510 1180,470 1280,390 1400,320 1455,305"]]
];
greys.forEach(function(g){mk(M,{d:d(smooth(line(g),6)),stroke:'#747474','stroke-width':1});});
mk(M,{d:d(smooth(line([[0,70,"15,1098 70,1085 135,1040 220,1005 335,930 360,905 440,845 520,835 620,785 790,727 940,727 1000,745 1060,770 1100,775 1290,775 1360,755 1440,745"],
 [480,170,"0,445 50,425 100,408 200,358 270,352 380,365 480,380 540,423 600,455 670,515 780,575 820,603 900,628"],
 [780,380,"30,5 110,40 150,100 230,185 300,260 400,390 450,435 510,470 570,530 650,570 700,585 780,585 860,560 920,525 980,490 1040,420 1110,350 1170,290"],
 [1100,90,"260,1138 350,1050 410,1025 510,990 580,950 640,903 770,860 870,780 1000,660 1080,585 1150,550 1220,510 1300,440 1380,395 1455,345"]]),6)),stroke:'#ff0000','stroke-width':1});
mk(M,{d:d(smooth(line([[0,70,"15,1125 100,1095 150,1060 250,1010 340,935 450,870 530,860 650,810 780,755 900,748 1000,755 1060,775 1100,785 1200,787 1280,777 1380,760 1440,755"],
 [480,170,"0,455 60,430 110,413 160,395 200,373 280,367 400,378 480,385 540,423 600,450 670,505 750,550 820,590 900,610"],
 [780,380,"40,0 110,35 150,80 230,150 330,265 400,350 450,395 510,425 570,485 640,520 700,547 760,550 860,535 920,510 980,478 1040,415 1130,340 1170,305"],
 [1100,90,"290,1140 370,1060 430,1040 510,1005 590,950 640,925 720,905 780,875 880,790 1000,680 1080,625 1150,585 1220,535 1300,490 1370,440 1455,385"]]),6)),stroke:'#0000ff','stroke-width':1});

var Rs=document.getElementById('rsi');
function rsi(a,w){
 a=smooth(a,6);
 var run=[a[0]],col=null;
 function flush(){if(run.length>1)mk(Rs,{d:d(run),stroke:col,'stroke-width':w});}
 for(var i=1;i<a.length;i++){
  var c2=a[i][1]<a[i-1][1]?'#0000ff':'#ff0000';
  if(col&&c2!=col){flush();run=[a[i-1]];}
  col=c2;run.push(a[i]);
 }
 flush();
}
var thin=pts(0,720,1.96,3,"10,387 25,402 40,385 60,300 95,155 105,180 115,250 135,295 160,270 190,260 215,210 248,124 265,150 285,210 300,240 320,480 335,545 350,578 360,560 385,440 405,405 430,330 490,224 500,270 520,370 535,540 545,600 555,600 600,505 615,502 640,575 660,640 678,697 690,680 730,500 745,410 765,355 780,345 805,270 835,270 857,204 875,265 900,285 920,350 935,432 960,345 998,250 1010,300 1030,345 1050,305 1070,295 1085,360 1105,460 1125,470 1150,540 1185,548 1220,598 1255,530 1270,560 1290,655 1310,600 1345,620 1375,618 1400,550 1430,520 1448,465 1470,490 1500,370 1530,307 1545,340 1568,460").concat(pts(800,720,1.96,3,"20,555 35,565 58,690 70,670 100,578 115,575 150,610 205,690 225,690 240,580 265,420 285,330 292,325 305,360 320,460 340,493 360,440 385,340 405,330 435,220 480,130 510,100 575,40 600,55 645,45 665,130 700,215 725,250 745,420 772,535 785,500 820,285 830,290 860,400 895,488 915,470 950,320 965,290 990,200 1000,210 1020,330 1040,470 1055,487 1085,400 1110,260 1140,150 1205,55 1225,55 1260,150 1280,205 1295,210 1330,460 1342,472 1385,360 1410,250 1440,205 1480,195 1507,172 1525,250 1540,355"));
var thick=pts(0,720,1.96,3,"10,366 45,370 70,350 100,295 120,280 160,270 215,250 250,210 285,191 305,200 330,270 350,350 370,405 395,430 420,430 460,385 490,320 510,302 530,320 550,375 575,435 610,485 650,535 695,605 720,603 750,555 810,400 860,295 895,270 915,280 945,318 970,325 1005,312 1030,320 1075,312 1100,335 1140,400 1155,435 1190,490 1230,545 1260,552 1300,590 1340,600 1385,608 1430,580 1490,510 1550,392").concat(pts(800,720,1.96,3,"0,395 40,455 80,555 120,590 180,620 220,648 235,648 265,600 310,480 350,458 390,405 420,375 460,300 520,170 580,85 650,52 725,150 780,335 800,368 850,365 910,420 955,400 1015,312 1040,325 1070,365 1095,382 1145,300 1245,90 1290,125 1350,300 1390,357 1420,345 1515,210 1540,232"));
rsi(thin,1);rsi(thick,2.6);
})();
</script>
</body></html>
